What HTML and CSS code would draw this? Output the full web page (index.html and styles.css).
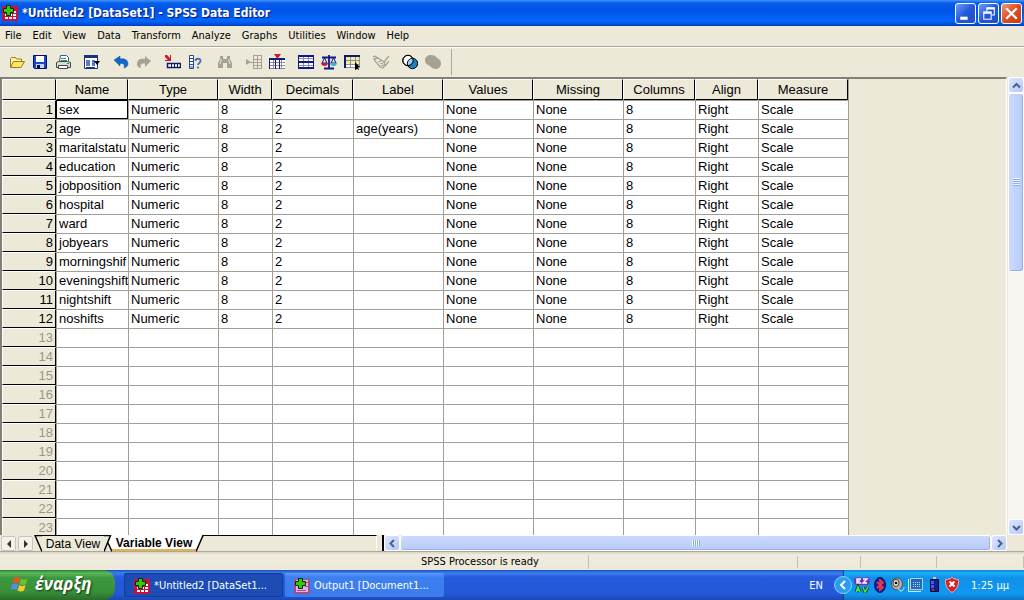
FILE: index.html
```
<!DOCTYPE html>
<html lang="en">
<head>
<meta charset="utf-8">
<title>*Untitled2 [DataSet1] - SPSS Data Editor</title>
<link rel="stylesheet" href="styles.css">
</head>
<body>
<svg class="defs" aria-hidden="true">
  <symbol id="app" viewBox="0 0 16 16">
    <path fill="#c4123c" d="M0 1h16v15H0z"/><path fill="#fff" d="M3 9h3v2H3zM7 9h3v2H7zM11 9h3v2h-3zM11 6h3v2h-3zM3 12h3v2H3zM7 12h3v2H7zM11 12h3v2h-3z"/>
    <path fill="#32c810" stroke="#062c00" d="M4.500.5h4v3h3v4h-3v3h-4v-3h-3v-4h3z"/>
  </symbol>
  <symbol id="out" viewBox="0 0 16 16">
    <path fill="#9c5090" d="M0 1h16v15H0z"/><path fill="#e8b0e0" d="M2 2h12v12H2z"/><path fill="#9c5090" d="M10 4h4v1h-4zM11 8h4v1h-4zM3 12h9v1H3z"/>
    <path fill="#32c810" stroke="#062c00" d="M4.500.5h4v3h3v4h-3v3h-4v-3h-3v-4h3z"/>
  </symbol>
</svg>

<header class="titlebar">
  <svg class="i16"><use href="#app"/></svg>
  <h1>*Untitled2 [DataSet1] - SPSS Data Editor</h1>
  <div class="winbtns">
    <button class="win" aria-label="Minimize"><svg viewBox="0 0 18 18"><path fill="#fff" d="M4 12h7v3H4z"/></svg></button>
    <button class="win" aria-label="Restore"><svg viewBox="0 0 18 18"><path fill="none" stroke="#fff" d="M7.500 7V4.500h7v6H12"/><path fill="#fff" d="M7 3h8v2H7z"/><path fill="none" stroke="#fff" d="M4.500 8.500h7v6h-7z"/><path fill="#fff" d="M4 7h8v2H4z"/></svg></button>
    <button class="win close" aria-label="Close"><svg viewBox="0 0 18 18"><path stroke="#fff" stroke-width="2.200" d="M4 4l10 10M14 4L4 14"/></svg></button>
  </div>
</header>

<nav class="menu">
  <button>File</button><button>Edit</button><button>View</button><button>Data</button><button>Transform</button><button>Analyze</button><button>Graphs</button><button>Utilities</button><button>Window</button><button>Help</button>
</nav>

<div class="toolbar">
  <div class="group">
    <button aria-label="Open"><svg viewBox="0 0 16 16"><path fill="#fff7a8" stroke="#9c7a10" d="M1.500 13V4.500l1-1h4l1 1.500h5v2"/><path fill="#ffe36a" stroke="#9c7a10" d="M1.500 13.500l3-6h11l-3.500 6z"/></svg></button>
    <button aria-label="Save"><svg viewBox="0 0 16 16"><path fill="#1a4cc0" stroke="#000c70" d="M1.500 1.500h13v13h-12l-1-1z"/><path fill="#fff" d="M4 2h8v6H4z"/><path fill="#c8d8f0" d="M4 10h8v4H4z"/><path fill="#000c70" d="M5 11h3v3H5z"/></svg></button>
    <button aria-label="Print"><svg viewBox="0 0 16 16"><path fill="#fff" stroke="#286878" d="M4.500 7.500l1-6h6l2 2v4"/><path stroke="#3090a0" d="M6 4.500h5M6 6.500h6"/><path fill="#d8dcc8" stroke="#404848" d="M1.500 8.500l2-1h9l3 1v5h-14z"/><path fill="#fff" stroke="#404848" d="M3.500 11.500h9v3h-9z"/><path stroke="#20a040" d="M12 9.500h2"/></svg></button>
  </div>
  <div class="group">
    <button aria-label="Dialog Recall"><svg viewBox="0 0 16 16"><path fill="#fff" stroke="#18347c" d="M.5 1.500h13v13H.5z"/><path fill="#18347c" d="M0 1h14v3H0z"/><path fill="#5c78d0" d="M2 6h4v6H2zM8 6h3v6H8z"/><path stroke="#18347c" d="M2 13.500h9"/><path d="M10 7h6l-3 4z"/></svg></button>
  </div>
  <div class="group">
    <button aria-label="Undo"><svg viewBox="0 0 16 16"><path fill="#1466cc" stroke="#0c4ca0" stroke-width=".5" d="M1 6l6-4v3c6-1 8 2 8 5 0 2-2 3.500-4 4 1-3 0-5-4-4.500V12z"/></svg></button>
    <button aria-label="Redo"><svg viewBox="0 0 16 16"><path fill="#a5a294" d="M15 7L9 2v3C4 4 1 6 1 10c0 2 1 3.500 4 4-1-3 0-5 4-4.500V13z"/></svg></button>
  </div>
  <div class="group">
    <button aria-label="Go To Case"><svg viewBox="0 0 16 16"><path fill="#d01830" d="M0 1l2 0 3 3V1h1v6H0V6h3L0 3z"/><path fill="#fff" stroke="#101868" stroke-width="1.500" d="M2.500 9.500h13v4h-13z"/><path fill="#101868" d="M6 9h1v5H6zM9 9h1v5H9zM12 9h1v5h-1z"/></svg></button>
    <button aria-label="Variables"><svg viewBox="0 0 16 16"><path fill="#fff" stroke="#2448a0" d="M1.500 1.500h4v13h-4z"/><path stroke="#2448a0" d="M2 4.500h4M2 7.500h4M2 10.500h4M2 13h4"/><path fill="none" stroke="#506cb0" stroke-width="1.800" d="M7.500 7c0-3 5-3 5 0 0 2-2.500 2-2.500 4M10 12.500v2"/></svg></button>
  </div>
  <div class="group">
    <button aria-label="Find"><svg viewBox="0 0 16 16"><path fill="#a5a294" d="M3 2h3v2l1 1h2l1-1V2h3v3l2 4v5h-5V9H6v5H1V9l2-4z"/><path stroke="#ece9d8" d="M4.500 5L3 10M11.500 5l1.500 5"/></svg></button>
  </div>
  <div class="group">
    <button aria-label="Insert Case"><svg viewBox="0 0 16 16"><path fill="#a5a294" d="M0 5l5 3-5 3z"/><path fill="none" stroke="#a5a294" d="M7 1.500h9M7 5.500h9M4 8.500h12M7 11.500h9M7 14.500h9M7.500 1v14M11.500 1v14M15.500 1v14"/></svg></button>
    <button aria-label="Insert Variable"><svg viewBox="0 0 16 16"><path fill="#fff" d="M0 4h16v11H0z"/><path fill="none" stroke="#8c8ca8" d="M0 8.500h16M0 11.500h16M0 14.500h16M4.500 5v10M12.500 5v10"/><path fill="#181c80" d="M0 4h16v2H0zM0 4h1v11H0zM6 5h1v10H6zM10 5h1v10h-1z"/><path fill="#d01830" d="M5 0h7L8.500 5z"/></svg></button>
  </div>
  <div class="group">
    <button aria-label="Split File"><svg viewBox="0 0 16 16"><path fill="#fff" d="M0 1h16v14H0z"/><path fill="none" stroke="#8890b0" d="M0 4.500h16M0 11.500h16M5.500 1v14M10.500 1v14"/><path fill="#10188c" d="M0 1h16v2H0zM0 7h16v2H0zM0 13h16v2H0zM0 1h1v14H0zM15 1h1v14h-1z"/></svg></button>
    <button aria-label="Weight Cases"><svg viewBox="0 0 16 16"><path stroke="#101888" stroke-width="1.800" d="M8 1v13M3 14.500h10M1 3.500h14"/><path fill="none" stroke="#101888" d="M3.500 4L1 9h5zM12.500 4L10 9h5z"/><path fill="#d01830" d="M0 9h7c0 4-7 4-7 0z"/><path fill="#38b0d0" d="M9 9h7c0 4-7 4-7 0z"/></svg></button>
    <button aria-label="Select Cases"><svg viewBox="0 0 16 16"><path fill="#fff" d="M0 1h16v13H0z"/><path fill="#f0eca0" d="M2 3h14v7H2z"/><path fill="none" stroke="#8890a0" d="M2 6.500h14M2 10.500h14M2 13.500h14M6.500 3v11M11.500 3v11M15.500 3v11"/><path fill="#10186c" d="M0 1h16v2H0zM0 1h2v13H0z"/><path d="M11 8l5 5-2 0 1 3-2-1-2 1z"/></svg></button>
  </div>
  <div class="group">
    <button aria-label="Value Labels"><svg viewBox="0 0 16 16"><path fill="none" stroke="#a5a294" stroke-width="1.300" d="M0 3c2-2 4 0 4 2M1 5l4-1 6 4 1 3-2 3-3-1-5-6zM5 8l3-1M7 10l3-1M8 12l3-1M16 2l-5 6M12 12l4-5"/></svg></button>
  </div>
  <div class="group">
    <button aria-label="Use Sets"><svg viewBox="0 0 16 16"><circle cx="6" cy="6.500" r="5.200" fill="#fff" stroke="#000"/><circle cx="10.500" cy="9.500" r="5.200" fill="#2080c0" stroke="#000"/><path fill="#9cd0f0" d="M6 8c1-3 4-4 5-3 0 3-2 6-5 6z"/><circle cx="6" cy="6.500" r="5.200" fill="none" stroke="#000"/></svg></button>
    <button aria-label="Show All Variables"><svg viewBox="0 0 16 16"><path fill="#a5a294" d="M6 1c3 0 5 1 6 3 3 1 4 3 4 6s-3 5-5 5-5-1-6-3C2 11 0 9 0 6s3-5 6-5z"/></svg></button>
  </div>
</div>

<main class="work">
  <div class="sheet">
    <table>
      <colgroup><col class="c54"><col class="c72"><col class="c90"><col class="c54"><col class="c81"><col class="c90"><col class="c90"><col class="c90"><col class="c72"><col class="c63"><col class="c90"></colgroup>
      <thead><tr><th></th><th>Name</th><th>Type</th><th>Width</th><th>Decimals</th><th>Label</th><th>Values</th><th>Missing</th><th>Columns</th><th>Align</th><th>Measure</th></tr></thead>
      <tbody id="rows"></tbody>
    </table>
  </div>
  <div class="vscroll">
    <button class="sb" aria-label="Scroll up"><svg viewBox="0 0 9 9"><path d="M1 6.500L4.500 3 8 6.500"/></svg></button>
    <div class="track"><div class="thumb"><i></i></div></div>
    <button class="sb" aria-label="Scroll down"><svg viewBox="0 0 9 9"><path d="M1 3l3.500 3.500L8 3"/></svg></button>
  </div>
</main>

<div class="tabrow">
  <div class="tabs">
    <button class="nav" aria-label="Previous sheet"><svg viewBox="0 0 8 8"><path d="M6 0v8L2 4z"/></svg></button>
    <button class="nav" aria-label="Next sheet"><svg viewBox="0 0 8 8"><path d="M2 0v8l4-4z"/></svg></button>
    <svg class="edge" viewBox="0 0 8 17"><path fill="none" stroke="#000" stroke-width="1.500" d="M8 .5H1l7 16"/></svg>
    <button class="tab">Data View</button>
    <svg class="edge" viewBox="0 0 8 17"><path fill="#fff" d="M6 0h2v17L4 8z"/><path fill="none" stroke="#000" stroke-width="1.500" d="M0 .5h6.500L0 16.500M4 8l4 8.500"/></svg>
    <button class="tab active">Variable View</button>
    <svg class="edge" viewBox="0 0 8 17"><path fill="#fff" d="M0 0h7L0 16z"/><path fill="none" stroke="#000" stroke-width="1.500" d="M8 .5H7L0 16.500"/></svg>
    <span class="fill"></span>
  </div>
  <div class="hscroll">
    <button class="sb" aria-label="Scroll left"><svg viewBox="0 0 9 9"><path d="M6 1L2.500 4.500 6 8"/></svg></button>
    <div class="thumb"><i></i></div>
    <button class="sb" aria-label="Scroll right"><svg viewBox="0 0 9 9"><path d="M3 1l3.500 3.500L3 8"/></svg></button>
  </div>
</div>

<div class="status"><span class="msg">SPSS Processor is ready</span><span class="s209"></span><span class="s63"></span><span class="s76"></span><span class="s87"></span></div>

<footer class="taskbar">
  <button class="start"><svg viewBox="0 0 18 18"><path fill="#e85420" d="M3 3c2-1.500 4-1.500 6 0L7.500 8.500c-2-1.500-4-1.500-6 0z"/><path fill="#6cc030" d="M10 3.500c2 1.200 4 1.200 6.500 0L15 9c-2 1.200-4 1.200-6.500 0z"/><path fill="#4c90f0" d="M1.200 9.500c2-1.500 4-1.500 6 0L5.500 15c-2-1.500-4-1.500-6 0z"/><path fill="#f8c830" d="M8.200 10c2 1.200 4 1.200 6.500 0L13 15.500c-2 1.200-4 1.200-6.500 0z"/></svg>έναρξη</button>
  <button class="task pressed"><svg class="i16"><use href="#app"/></svg>*Untitled2 [DataSet1...</button>
  <button class="task"><svg class="i16"><use href="#out"/></svg>Output1 [Document1...</button>
  <span class="lang">EN</span>
  <div class="tray">
    <button class="expand" aria-label="Show hidden icons"><svg viewBox="0 0 18 18"><circle cx="9" cy="9" r="8.500" fill="#2c9cf0" stroke="#8cd0ff"/><path fill="none" stroke="#fff" stroke-width="2" d="M11 5L7 9l4 4"/></svg></button>
    <svg viewBox="0 0 16 16"><path fill="#7830b8" d="M0 2l4-2 5 1 6-1 1 5-2 3H2L0 6z"/><path fill="none" stroke="#fff" stroke-width="1.400" d="M7 2H3v4h4M3 4h3M9 2h4L9 6h4"/><path fill="none" stroke="#0a3810" stroke-width="3" d="M2 15l2-5 2 5M9 10l2 5 3-5"/><path fill="none" stroke="#48e858" stroke-width="1.500" d="M2 15l2-5 2 5M3 13.500h2M9 10l2 5 3-5"/></svg>
    <svg viewBox="0 0 16 16"><ellipse cx="8" cy="8" rx="5.500" ry="7.500" fill="#1020b0" stroke="#081060"/><path fill="none" stroke="#f03838" stroke-width="1.700" d="M5 5l6 5.500L8 13V3l3 2.500L5 11"/></svg>
    <svg viewBox="0 0 16 16"><ellipse cx="7" cy="7" rx="5.500" ry="6" fill="#b0b0a8" stroke="#505048"/><ellipse cx="6" cy="6" rx="3" ry="3.500" fill="#e8e8e0" stroke="#404038"/><circle cx="6" cy="6" r="1.300"/><path fill="none" stroke="#c8e0f8" d="M10 14c3 0 4-2 4-4M8 12l3 2"/></svg>
    <svg viewBox="0 0 16 16"><path fill="#2468b8" stroke="#a8d4f8" d="M2.500 1.500h12v11h-12z"/><path stroke="#a8e0ff" stroke-dasharray="1 1" d="M5 5.500h7M5 7.500h7M5 9.500h7"/><path fill="none" stroke="#d8e8f8" d="M.5 2v12.500H13"/></svg>
    <svg viewBox="0 0 16 16"><path fill="#102090" stroke="#080830" d="M4.500 2.500h8v12h-8z"/><path fill="#c8c8d8" d="M7 0h3v2H7z"/><path fill="#4060f0" d="M5 4h3v3H5zM5 8h3v3H5z"/><path fill="#e02020" d="M6 12h2v2H6z"/></svg>
    <svg viewBox="0 0 16 16"><path fill="#d82028" stroke="#f0b0a8" d="M8 .5c2 1.500 4 2 6.500 2C15 9 12 13 8 15.500 4 13 1 9 1.500 2.500 4 2.500 6 2 8 .5z"/><path stroke="#fff" stroke-width="2" d="M5.500 4.500l5 5M10.500 4.500l-5 5"/></svg>
    <time>1:25 μμ</time>
  </div>
</footer>
<script src="rows.js"></script>
</body>
</html>
```
FILE: rows.js
```
const variables = ['sex', 'age', 'maritalstatu', 'education', 'jobposition', 'hospital',
  'ward', 'jobyears', 'morningshif', 'eveningshift', 'nightshift', 'noshifts'];
const labels = { age: 'age(years)' };
const body = document.getElementById('rows');
for (let n = 1; n <= 23; n++) {
  const row = body.insertRow();
  const head = document.createElement('th');
  head.scope = 'row';
  head.textContent = n;
  row.append(head);
  const name = variables[n - 1];
  if (!name) row.className = 'unused';
  const values = name
    ? [name, 'Numeric', '8', '2', labels[name] || '', 'None', 'None', '8', 'Right', 'Scale']
    : Array(10).fill('');
  for (const value of values) row.insertCell().textContent = value;
}
body.rows[0].cells[1].className = 'current';
```
FILE: styles.css
```
* { box-sizing: border-box; }
body {
  margin: 0; height: 100vh; display: flex; flex-direction: column; overflow: hidden;
  background: #ece9d8; color: #000;
  font: 11px/14px "DejaVu Sans Condensed", "DejaVu Sans", sans-serif;
}
button { font: inherit; color: inherit; border: 0; background: none; padding: 0; margin: 0; }
svg { display: block; flex: none; }
.defs { position: absolute; width: 0; height: 0; }
.i16 { width: 16px; height: 16px; }

.titlebar {
  flex: none; height: 26px; display: flex; align-items: center; padding: 0 2px; gap: 4px;
  background: linear-gradient(#3c96ff 0, #0a5cea 3px, #0054e3 10px, #0066ff 21px, #0050d8 24px, #003cb4 26px);
}
.titlebar h1 {
  flex: 1; margin: 0; color: #fff; text-shadow: 1px 1px 1px #0a1883;
  font: bold 12px/18px "DejaVu Sans Condensed", "DejaVu Sans", sans-serif;
}
.winbtns { display: flex; gap: 2px; }
.win {
  width: 21px; height: 21px; border: 1px solid #fff; border-radius: 3px;
  background: linear-gradient(135deg, #6c9cf8, #2458dc 50%, #1c50d0);
}
.win svg { width: 19px; height: 19px; }
.win.close { background: linear-gradient(135deg, #f09878, #e04c20 50%, #c83c10); }

.menu { flex: none; height: 21px; display: flex; gap: 1px; border-bottom: 1px solid #aca899; }
.menu button { padding: 0 5px; }

.toolbar {
  flex: none; height: 30px; display: flex; align-items: center; gap: 6px; padding: 0 0 2px 5px;
  border-top: 1px solid #fff;
}
.group { display: flex; }
.group button { width: 23px; height: 24px; display: grid; place-items: center; }
.group svg { width: 16px; height: 16px; }
.group:last-child { padding-right: 7px; border-right: 1px solid #aca899; height: 26px; align-items: center; }

.work { flex: 1; min-height: 0; display: flex; }
.sheet {
  flex: 1; min-width: 0; overflow: hidden; margin-right: 1px;
  border-top: 2px solid #808074; border-left: 2px solid #808074; border-right: 1px solid #fff;
}
table {
  width: 847px; table-layout: fixed; border-collapse: separate; border-spacing: 0; background: #fff;
  border-right: 1px solid #a0a096; font: 13px/18px "Liberation Sans", Arial, sans-serif;
}
.c54 { width: 54px; } .c63 { width: 63px; } .c72 { width: 72px; } .c81 { width: 81px; } .c90 { width: 90px; }
th {
  font-weight: normal; background: #ece9d8; padding: 0 2px; height: 21px;
  border: 1px solid #fff; border-right-color: #000; border-bottom-color: #000;
}
tbody th { height: 19px; line-height: 17px; text-align: right; }
td {
  height: 19px; padding: 0 0 0 2px; overflow: hidden; white-space: nowrap;
  border-top: 1px solid #a0a096; border-left: 1px solid #a0a096;
}
.unused th { color: #9a978a; }
.current { outline: 1px solid #000; outline-offset: -1px; }

.vscroll { flex: none; width: 16px; display: flex; flex-direction: column; background: #f7f6f0; }
.sb {
  flex: none; width: 16px; height: 16px; display: grid; place-items: center;
  border: 1px solid #fff; border-radius: 3px; background: linear-gradient(135deg, #dce6ff, #b4c8f8);
}
.sb svg { width: 9px; height: 9px; }
.sb path { fill: none; stroke: #4d6185; stroke-width: 2; }
.track { flex: 1; display: flex; flex-direction: column; }
.thumb {
  display: grid; place-items: center; border: 1px solid #fff; border-radius: 3px;
  box-shadow: inset -1px -1px #98b0e8; background: #c3d3fd;
}
.track .thumb { height: 42%; background: linear-gradient(90deg, #cbdafe, #b8cbf8); }
.track i { width: 7px; height: 8px; background: repeating-linear-gradient(#eef4ff 0 1px, #8cb0f8 1px 2px); }

.tabrow { flex: none; height: 17px; display: flex; border-bottom: 1px solid #aca899; }
.tabs { flex: 0 0 384px; display: flex; font: 12px/16px "Liberation Sans", Arial, sans-serif; border-right: 2px solid #000; padding-right: 5px; }
.nav { width: 15px; height: 15px; margin: 1px; border: 1px solid #c8c5b4; border-radius: 2px; background: #f4f2e8; display: grid; place-items: center; }
.nav svg { width: 8px; height: 8px; }
.nav path { fill: #333; }
.edge { width: 8px; height: 17px; }
.tab { width: 62px; border-top: 1px solid #000; white-space: nowrap; }
.tab.active { width: 84px; font-weight: bold; border-color: #fff; background: #fff; border-bottom: 2px solid #e8b050; line-height: 14px; }
.fill { flex: 1; border-top: 1px solid #000; border-right: 1px solid #fff; }
.hscroll { flex: 1; display: flex; margin-right: 17px; }
.hscroll .thumb { flex: 1; background: linear-gradient(#cbdafe, #b8cbf8); }
.hscroll i { width: 8px; height: 7px; background: repeating-linear-gradient(90deg, #eef4ff 0 1px, #8cb0f8 1px 2px); }

.status { flex: none; height: 18px; display: flex; align-items: center; padding-top: 2px; background: linear-gradient(#d8d4c0, #f0ede0 3px, #ece9d8); }
.status span { height: 12px; border-right: 1px solid #c4c1ae; }
.status .msg { flex: 1; height: auto; padding-left: 421px; }
.s209 { width: 209px; } .s63 { width: 63px; } .s76 { width: 76px; } .s87 { width: 87px; }

.taskbar {
  flex: none; height: 30px; display: flex; align-items: center; color: #fff;
  background: linear-gradient(#1c4cc0 0, #3c80f0 3px, #245cdc 7px, #2458d8 24px, #1c48b4);
}
.start {
  width: 115px; height: 30px; display: flex; align-items: center; gap: 6px; padding: 0 0 2px 11px; margin-right: 9px;
  border-radius: 0 12px 12px 0; background: linear-gradient(#2c7c30 0, #5cb85c 3px, #3c9840 8px, #389038 22px, #286c28);
  font: italic bold 17px/24px "Open Sans", "Noto Sans", sans-serif; text-shadow: 1px 1px 2px #103810;
}
.start svg { width: 18px; height: 18px; }
.task {
  width: 159px; height: 24px; display: flex; align-items: center; gap: 4px; padding: 2px 0 0 9px; margin-right: 2px;
  border-radius: 2px; white-space: nowrap; background: linear-gradient(#5c9cf8, #3c80f0 4px, #3c7cec);
}
.pressed { background: #1c4cb4; border: 1px solid #143c94; }
.lang { margin-left: auto; padding: 2px 10px 0 0; }
.tray {
  height: 30px; width: 181px; display: flex; align-items: center; gap: 2px; margin-left: 10px;
  background: linear-gradient(#1080d8 0, #18b0f8 3px, #1090e8 8px, #1098f0 24px, #1070c0);
  border-left: 1px solid #104880;
}
.tray svg { width: 16px; height: 16px; }
.tray .expand { margin: 0 0 0 -10px; }
.tray .expand svg { width: 18px; height: 18px; }
.tray time { margin-left: auto; padding: 2px 15px 0 0; }
```
